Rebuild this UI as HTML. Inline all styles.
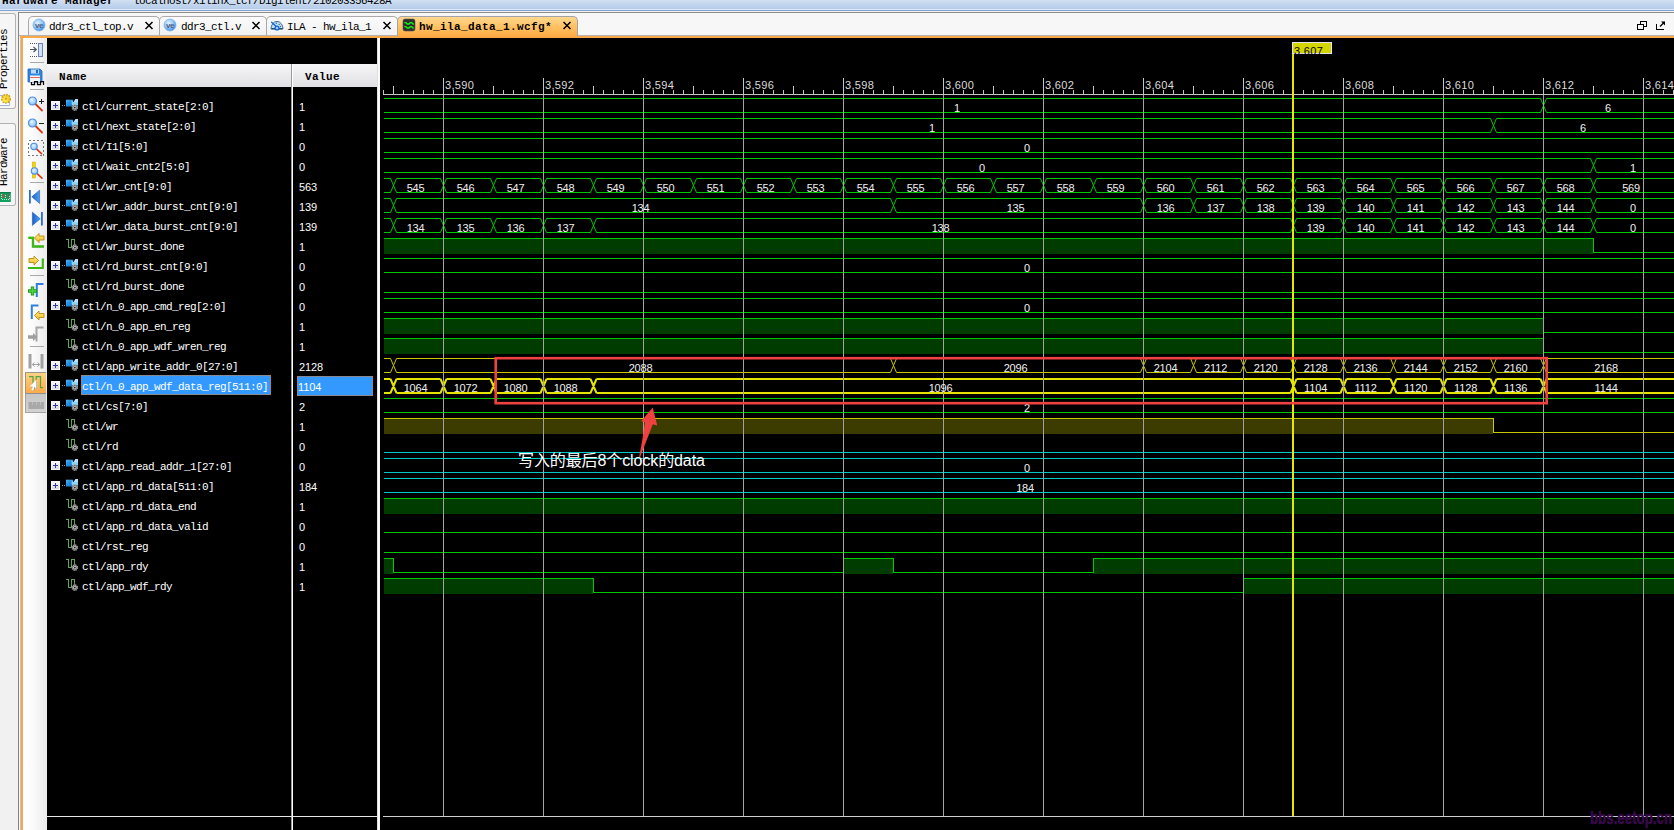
<!DOCTYPE html>
<html><head><meta charset="utf-8"><title>hw_ila_data_1.wcfg</title>
<style>
*{margin:0;padding:0;box-sizing:border-box}
html,body{width:1674px;height:830px;overflow:hidden;background:#000}
body{position:relative;font-family:"Liberation Mono",monospace;font-size:11px;letter-spacing:-0.6px;color:#000;line-height:12px}
.abs{position:absolute}
#titlebar{left:0;top:0;width:1674px;height:10px;background:linear-gradient(#d2e0f2,#bdd2ec 60%,#b4cbe9);overflow:hidden}
#titlebar .t{position:absolute;top:-5px;white-space:pre;height:12px}
#tl1{left:0;top:9px;width:1674px;height:1px;background:#dfe9f6}
#tl2{left:0;top:10px;width:1674px;height:1px;background:#7fa3d3}
#tl3{left:0;top:11px;width:1674px;height:1px;background:#f2f2f2}
#side{left:0;top:11px;width:18px;height:819px;background:#f1f1f1}
.vtab{left:0;width:16px;background:#f6f6f6;border:1px solid #b2b2b2;border-left:none;border-radius:0 3px 3px 0}
.vtxt{position:absolute;white-space:pre;transform-origin:0 0;transform:rotate(-90deg);height:12px}
#frameT{left:18px;top:12px;width:1656px;height:1px;background:#8e8e8e}
#frameL{left:18px;top:12px;width:1px;height:818px;background:#858585}
#tabbar{left:19px;top:13px;width:1655px;height:23px;background:#f7f7f7}
.tab{top:16px;height:19px;background:linear-gradient(#fbfbfb,#f1f1f1);border:1px solid #a9a9a9;border-bottom:none;border-radius:5px 5px 0 0}
.tab.act{height:20px;background:linear-gradient(#ffd890,#ffc468 45%,#ffab42);border-color:#a2a2aa}
.tabt{position:absolute;top:4px;white-space:pre;height:12px}
#orgT{left:20px;top:36px;width:1654px;height:2px;background:#fba748}
#orgL{left:21px;top:36px;width:2px;height:794px;background:#fba748}
#gapL{left:19px;top:13px;width:2px;height:817px;background:#f7f7f7}
#tool{left:23px;top:38px;width:24px;height:792px;background:linear-gradient(90deg,#ffffff,#fbfbfb 40%,#ececec)}
.sep{left:30px;width:14px;height:1px;background:#a9a9a9}
#hdrN{left:47px;top:64px;width:244px;height:23px;background:linear-gradient(#f6f6f7,#ececee 45%,#e1e0e5)}
#hdrV{left:293px;top:64px;width:84px;height:23px;background:linear-gradient(#f6f6f7,#ececee 45%,#e1e0e5)}
.hb{font-weight:bold;letter-spacing:0.4px}
.nm{position:absolute;left:82px;color:#fff;white-space:pre;height:12px}
.vl{position:absolute;left:299px;color:#fff;white-space:pre;font-family:"Liberation Sans",sans-serif;font-size:11px;letter-spacing:-0.1px;height:12px}
svg{position:absolute;left:0;top:0;overflow:visible;z-index:2}
svg text{font-family:"Liberation Sans",sans-serif;font-size:11px;letter-spacing:-0.15px}
</style></head>
<body>
<div id="titlebar" class="abs"><span class="t hb" style="left:2px">Hardware Manager</span><span class="t" style="left:133px">localhost/xilinx_tcf/Digilent/210203356428A</span></div>
<div id="tl1" class="abs"></div>
<div id="tl2" class="abs"></div>
<div id="tl3" class="abs"></div>
<div id="side" class="abs"></div>
<div class="abs vtab" style="top:13px;height:96px"></div>
<div class="abs vtab" style="top:123px;height:83px"></div>
<div class="vtxt" style="left:-2px;top:89px">Properties</div>
<div class="vtxt" style="left:-2px;top:186px">Hardware</div>
<div id="tabbar" class="abs"></div>
<div id="gapL" class="abs"></div>
<div id="frameT" class="abs"></div>
<div id="frameL" class="abs"></div>
<div class="abs" style="left:19px;top:35px;width:1655px;height:1px;background:#b4b4b4"></div>
<div class="abs tab" style="left:28px;width:132px"><span class="tabt" style="left:20px">ddr3_ctl_top.v</span></div>
<div class="abs tab" style="left:159px;width:108px"><span class="tabt" style="left:21px">ddr3_ctl.v</span></div>
<div class="abs tab" style="left:266px;width:132px"><span class="tabt" style="left:20px">ILA - hw_ila_1</span></div>
<div class="abs tab act" style="left:397px;width:181px"><span class="tabt hb" style="left:21px">hw_ila_data_1.wcfg*</span></div>
<div id="orgT" class="abs"></div>
<div id="orgL" class="abs"></div>
<div class="abs" style="left:20px;top:38px;width:1px;height:792px;background:#c4c4c4"></div>
<div id="tool" class="abs"></div>
<div class="abs sep" style="top:62px"></div>
<div class="abs sep" style="top:89px"></div>
<div class="abs sep" style="top:182px"></div>
<div class="abs sep" style="top:275px"></div>
<div class="abs sep" style="top:346px"></div>
<div class="abs" style="left:25px;top:372px;width:21px;height:22px;background:linear-gradient(#ffd286,#ffbc62 50%,#fdab4a);border:1px solid #9a948c;border-right:none;border-bottom-color:#8e8e8e"></div>
<div class="abs" style="left:25px;top:394px;width:21px;height:19px;background:linear-gradient(#c6c6c6,#d2d2d2);border:1px solid #a4a4a4;border-right:none;border-top:none"></div>
<div id="hdrN" class="abs"><span class="abs hb" style="left:12px;top:7px">Name</span></div>
<div id="hdrV" class="abs"><span class="abs hb" style="left:12px;top:7px">Value</span></div>
<div class="abs" style="left:291px;top:64px;width:1px;height:766px;background:#9a9a9a"></div>
<div class="abs" style="left:292px;top:64px;width:1px;height:766px;background:#ffffff"></div>
<div class="abs" style="left:377px;top:38px;width:3px;height:792px;background:linear-gradient(90deg,#c8c8c8,#ffffff 40%,#f4f4f4)"></div>
<div class="abs" style="left:47px;top:816px;width:330px;height:1px;background:#e8e8e8"></div>
<div class="abs" style="left:81px;top:375px;width:190px;height:20px;background:#3399ff;border:1px dotted #d87a28"></div>
<div class="abs" style="left:297px;top:376px;width:76px;height:20px;background:#3399ff;border:1px dotted #d87a28"></div>
<div class="nm" style="top:101px">ctl/current_state[2:0]</div>
<div class="vl" style="left:299px;top:101px">1</div>
<div class="nm" style="top:121px">ctl/next_state[2:0]</div>
<div class="vl" style="left:299px;top:121px">1</div>
<div class="nm" style="top:141px">ctl/I1[5:0]</div>
<div class="vl" style="left:299px;top:141px">0</div>
<div class="nm" style="top:161px">ctl/wait_cnt2[5:0]</div>
<div class="vl" style="left:299px;top:161px">0</div>
<div class="nm" style="top:181px">ctl/wr_cnt[9:0]</div>
<div class="vl" style="left:299px;top:181px">563</div>
<div class="nm" style="top:201px">ctl/wr_addr_burst_cnt[9:0]</div>
<div class="vl" style="left:299px;top:201px">139</div>
<div class="nm" style="top:221px">ctl/wr_data_burst_cnt[9:0]</div>
<div class="vl" style="left:299px;top:221px">139</div>
<div class="nm" style="top:241px">ctl/wr_burst_done</div>
<div class="vl" style="left:299px;top:241px">1</div>
<div class="nm" style="top:261px">ctl/rd_burst_cnt[9:0]</div>
<div class="vl" style="left:299px;top:261px">0</div>
<div class="nm" style="top:281px">ctl/rd_burst_done</div>
<div class="vl" style="left:299px;top:281px">0</div>
<div class="nm" style="top:301px">ctl/n_0_app_cmd_reg[2:0]</div>
<div class="vl" style="left:299px;top:301px">0</div>
<div class="nm" style="top:321px">ctl/n_0_app_en_reg</div>
<div class="vl" style="left:299px;top:321px">1</div>
<div class="nm" style="top:341px">ctl/n_0_app_wdf_wren_reg</div>
<div class="vl" style="left:299px;top:341px">1</div>
<div class="nm" style="top:361px">ctl/app_write_addr_0[27:0]</div>
<div class="vl" style="left:299px;top:361px">2128</div>
<div class="nm" style="top:381px">ctl/n_0_app_wdf_data_reg[511:0]</div>
<div class="vl" style="left:298px;top:381px">1104</div>
<div class="nm" style="top:401px">ctl/cs[7:0]</div>
<div class="vl" style="left:299px;top:401px">2</div>
<div class="nm" style="top:421px">ctl/wr</div>
<div class="vl" style="left:299px;top:421px">1</div>
<div class="nm" style="top:441px">ctl/rd</div>
<div class="vl" style="left:299px;top:441px">0</div>
<div class="nm" style="top:461px">ctl/app_read_addr_1[27:0]</div>
<div class="vl" style="left:299px;top:461px">0</div>
<div class="nm" style="top:481px">ctl/app_rd_data[511:0]</div>
<div class="vl" style="left:299px;top:481px">184</div>
<div class="nm" style="top:501px">ctl/app_rd_data_end</div>
<div class="vl" style="left:299px;top:501px">1</div>
<div class="nm" style="top:521px">ctl/app_rd_data_valid</div>
<div class="vl" style="left:299px;top:521px">0</div>
<div class="nm" style="top:541px">ctl/rst_reg</div>
<div class="vl" style="left:299px;top:541px">0</div>
<div class="nm" style="top:561px">ctl/app_rdy</div>
<div class="vl" style="left:299px;top:561px">1</div>
<div class="nm" style="top:581px">ctl/app_wdf_rdy</div>
<div class="vl" style="left:299px;top:581px">1</div>
<div class="abs" style="left:518px;top:451px;color:#fff;font-family:'Liberation Sans','Noto Sans CJK SC',sans-serif;font-size:16px;line-height:20px;letter-spacing:-0.1px;z-index:5;white-space:pre">写入的最后8个clock的data</div>
<div class="abs" style="left:1590px;top:808px;color:#380a4a;-webkit-text-stroke:0.5px #380a4a;font-family:'Liberation Sans',sans-serif;font-weight:bold;font-size:17.5px;line-height:20px;letter-spacing:0;white-space:pre;transform-origin:0 0;transform:scaleX(0.76);z-index:5">bbs.eetop.cn</div>
<svg width="1674" height="830" viewBox="0 0 1674 830">
<path d="M145.5 22 L152.5 29 M152.5 22 L145.5 29" stroke="#000" stroke-width="1.5" fill="none"/>
<path d="M252.5 22 L259.5 29 M259.5 22 L252.5 29" stroke="#000" stroke-width="1.5" fill="none"/>
<path d="M383.5 22 L390.5 29 M390.5 22 L383.5 29" stroke="#000" stroke-width="1.5" fill="none"/>
<path d="M563.5 22 L570.5 29 M570.5 22 L563.5 29" stroke="#000" stroke-width="1.5" fill="none"/>
<defs>
<linearGradient id="gbus" x1="0" y1="0" x2="1" y2="1"><stop offset="0" stop-color="#56b4f2"/><stop offset="0.45" stop-color="#2390e2"/><stop offset="1" stop-color="#1272cc"/></linearGradient>
<linearGradient id="gexp" x1="0" y1="0" x2="0" y2="1"><stop offset="0" stop-color="#ffffff"/><stop offset="1" stop-color="#d4d4d4"/></linearGradient>
<radialGradient id="gve" cx="0.4" cy="0.35" r="0.7"><stop offset="0" stop-color="#e4f2ff"/><stop offset="0.55" stop-color="#93c6f5"/><stop offset="1" stop-color="#3583de"/></radialGradient>
<radialGradient id="glens" cx="0.4" cy="0.35" r="0.7"><stop offset="0" stop-color="#e6f4ff"/><stop offset="0.7" stop-color="#9fd0fa"/><stop offset="1" stop-color="#5aa4ec"/></radialGradient>
<linearGradient id="gyel" x1="0" y1="0" x2="0" y2="1"><stop offset="0" stop-color="#fff08a"/><stop offset="1" stop-color="#f0b820"/></linearGradient>
<linearGradient id="ggrn" x1="0" y1="0" x2="0" y2="1"><stop offset="0" stop-color="#58e020"/><stop offset="1" stop-color="#2a9010"/></linearGradient>
<linearGradient id="gblu" x1="0" y1="0" x2="1" y2="0"><stop offset="0" stop-color="#1a60c8"/><stop offset="1" stop-color="#50a0f0"/></linearGradient>
<g id="gear"><circle cx="0" cy="0" r="2.8" fill="#6a6a6a"/><circle cx="0" cy="0" r="2.75" fill="none" stroke="#a8a8a8" stroke-width="1.1" stroke-dasharray="1.2 0.96"/><circle cx="0" cy="0" r="1.7" fill="#cfcfcf"/><circle cx="0" cy="0" r="0.9" fill="#1a1a1a"/></g>
<g id="exp"><rect x="0.5" y="0.5" width="8" height="8" fill="url(#gexp)" stroke="#f4f4f4" stroke-width="1"/><path d="M2 4.5H7M4.5 2V7" stroke="#2a3f9c" stroke-width="1" fill="none" shape-rendering="crispEdges"/></g>
<g id="busic"><path d="M5.5 7.6 L8.5 10.5 L9 7.5 Z" fill="#3a3a3a" opacity="0.7"/><rect x="0" y="0.7" width="7.2" height="6.8" fill="url(#gbus)"/><path d="M5.6 0.9 L7.6 3.2 L9.6 0 L12 0 L12 6.6 L7 7.4 L5.6 5 Z" fill="#8fd0f7"/><path d="M7.6 3.2 L9.6 0 L12 0 L12 3 Z" fill="#b9e2fa"/><use href="#gear" x="8.8" y="8.6"/></g>
<g id="bitic"><path d="M0 0.5 H2.5 V8.5 H5.5 V0.5 H8.5 V6" stroke="#62a552" stroke-width="1" fill="none" shape-rendering="crispEdges"/><use href="#gear" x="8.8" y="8.6"/></g>
<g id="lens"><path d="M3 3 L9.5 9.5" stroke="#d83a18" stroke-width="1.8" stroke-linecap="round"/><circle cx="0" cy="0" r="4" fill="url(#glens)" stroke="#4d8fe0" stroke-width="1.2"/></g>
<g id="lenss"><path d="M2.4 2.4 L7.5 7.2" stroke="#d83a18" stroke-width="1.6" stroke-linecap="round"/><circle cx="0" cy="0" r="3.2" fill="url(#glens)" stroke="#4d8fe0" stroke-width="1.1"/></g>
<g id="xarrL"><path d="M0 4.5 L4.5 0 V2.5 H9.5 V6.5 H4.5 V9 Z" fill="url(#gyel)" stroke="#b88a10" stroke-width="0.9" stroke-linejoin="round"/></g>
<g id="xarrR"><path d="M9.5 4.5 L5 0 V2.5 H0 V6.5 H5 V9 Z" fill="url(#gyel)" stroke="#b88a10" stroke-width="0.9" stroke-linejoin="round"/></g>
</defs>
<use href="#exp" x="51" y="101"/>
<path d="M61.5 105.5h1m1 0h1m1 0h1" stroke="#9a9a9a" stroke-width="1" shape-rendering="crispEdges"/>
<use href="#busic" x="66" y="99"/>
<use href="#exp" x="51" y="121"/>
<path d="M61.5 125.5h1m1 0h1m1 0h1" stroke="#9a9a9a" stroke-width="1" shape-rendering="crispEdges"/>
<use href="#busic" x="66" y="119"/>
<use href="#exp" x="51" y="141"/>
<path d="M61.5 145.5h1m1 0h1m1 0h1" stroke="#9a9a9a" stroke-width="1" shape-rendering="crispEdges"/>
<use href="#busic" x="66" y="139"/>
<use href="#exp" x="51" y="161"/>
<path d="M61.5 165.5h1m1 0h1m1 0h1" stroke="#9a9a9a" stroke-width="1" shape-rendering="crispEdges"/>
<use href="#busic" x="66" y="159"/>
<use href="#exp" x="51" y="181"/>
<path d="M61.5 185.5h1m1 0h1m1 0h1" stroke="#9a9a9a" stroke-width="1" shape-rendering="crispEdges"/>
<use href="#busic" x="66" y="179"/>
<use href="#exp" x="51" y="201"/>
<path d="M61.5 205.5h1m1 0h1m1 0h1" stroke="#9a9a9a" stroke-width="1" shape-rendering="crispEdges"/>
<use href="#busic" x="66" y="199"/>
<use href="#exp" x="51" y="221"/>
<path d="M61.5 225.5h1m1 0h1m1 0h1" stroke="#9a9a9a" stroke-width="1" shape-rendering="crispEdges"/>
<use href="#busic" x="66" y="219"/>
<use href="#bitic" x="66" y="239"/>
<use href="#exp" x="51" y="261"/>
<path d="M61.5 265.5h1m1 0h1m1 0h1" stroke="#9a9a9a" stroke-width="1" shape-rendering="crispEdges"/>
<use href="#busic" x="66" y="259"/>
<use href="#bitic" x="66" y="279"/>
<use href="#exp" x="51" y="301"/>
<path d="M61.5 305.5h1m1 0h1m1 0h1" stroke="#9a9a9a" stroke-width="1" shape-rendering="crispEdges"/>
<use href="#busic" x="66" y="299"/>
<use href="#bitic" x="66" y="319"/>
<use href="#bitic" x="66" y="339"/>
<use href="#exp" x="51" y="361"/>
<path d="M61.5 365.5h1m1 0h1m1 0h1" stroke="#9a9a9a" stroke-width="1" shape-rendering="crispEdges"/>
<use href="#busic" x="66" y="359"/>
<use href="#exp" x="51" y="381"/>
<path d="M61.5 385.5h1m1 0h1m1 0h1" stroke="#9a9a9a" stroke-width="1" shape-rendering="crispEdges"/>
<use href="#busic" x="66" y="379"/>
<use href="#exp" x="51" y="401"/>
<path d="M61.5 405.5h1m1 0h1m1 0h1" stroke="#9a9a9a" stroke-width="1" shape-rendering="crispEdges"/>
<use href="#busic" x="66" y="399"/>
<use href="#bitic" x="66" y="419"/>
<use href="#bitic" x="66" y="439"/>
<use href="#exp" x="51" y="461"/>
<path d="M61.5 465.5h1m1 0h1m1 0h1" stroke="#9a9a9a" stroke-width="1" shape-rendering="crispEdges"/>
<use href="#busic" x="66" y="459"/>
<use href="#exp" x="51" y="481"/>
<path d="M61.5 485.5h1m1 0h1m1 0h1" stroke="#9a9a9a" stroke-width="1" shape-rendering="crispEdges"/>
<use href="#busic" x="66" y="479"/>
<use href="#bitic" x="66" y="499"/>
<use href="#bitic" x="66" y="519"/>
<use href="#bitic" x="66" y="539"/>
<use href="#bitic" x="66" y="559"/>
<use href="#bitic" x="66" y="579"/>
<circle cx="39" cy="25" r="6" fill="url(#gve)" stroke="#7ab4ee" stroke-width="0.8"/>
<text x="39" y="27.6" text-anchor="middle" style="font-size:8px;font-weight:bold;letter-spacing:-0.4px" fill="#4a5f86">ve</text>
<circle cx="170" cy="25" r="6" fill="url(#gve)" stroke="#7ab4ee" stroke-width="0.8"/>
<text x="170" y="27.6" text-anchor="middle" style="font-size:8px;font-weight:bold;letter-spacing:-0.4px" fill="#4a5f86">ve</text>
<path d="M271 29 A6 7.6 0 0 1 283 29 Z" fill="#bfe0f6" stroke="#3d6f8e" stroke-width="1"/>
<path d="M271.5 28.7 H282.5" stroke="#1f4860" stroke-width="1.2"/>
<circle cx="276.3" cy="23.3" r="0.7" fill="#466a80"/><circle cx="279.2" cy="24.4" r="0.7" fill="#466a80"/><circle cx="280.4" cy="26.5" r="0.7" fill="#466a80"/>
<path d="M271.6 22.2 L277.4 27.6" stroke="#1466d4" stroke-width="1.3" stroke-linecap="round"/><circle cx="277" cy="28" r="1.9" fill="#9ccdf5" stroke="#1466d4" stroke-width="1.3"/>
<rect x="403" y="19" width="12" height="12" rx="2" fill="#2e2e2e" stroke="#555" stroke-width="0.6"/>
<path d="M404.300 22.700 h1.700 l1.200 1.300 h1.800 l1.200 -1.300 h1.600 l1.200 1.300 h0.800 M404.300 26.700 h1.700 l1.200 1.300 h1.800 l1.200 -1.300 h1.600 l1.200 1.300 h0.800" stroke="#14f614" stroke-width="1.300" fill="none" stroke-linejoin="round"/>
<g fill="none" stroke="#000" stroke-width="1.3" shape-rendering="crispEdges"><rect x="1640.5" y="21.5" width="6" height="5" fill="#f7f7f7"/><rect x="1637.5" y="24.5" width="6" height="5" fill="#f7f7f7"/></g>
<path d="M1656.5 24 V29.5 H1664" fill="none" stroke="#000" stroke-width="1.3" shape-rendering="crispEdges"/><path d="M1660 26.5 L1664.5 22" stroke="#000" stroke-width="1.3"/><path d="M1661 21.5 H1665 V25.5 Z" fill="#000"/>
<path d="M0 95.500 H9.500 V105.500 H0" fill="#ffffff" stroke="#9db4dc" stroke-width="1"/>
<circle cx="6" cy="98.800" r="4.300" fill="#f3cf2e" stroke="#cf9a1c" stroke-width="1.300" stroke-dasharray="1.700 1.150"/><circle cx="5.300" cy="99.500" r="2.600" fill="#faea50" opacity="0.8"/><circle cx="6" cy="98.800" r="1" fill="#d48e18"/>
<rect x="0" y="192" width="10.800" height="10" fill="#12a05e"/><rect x="0" y="192" width="10.800" height="1.200" fill="#0b8048"/><rect x="3" y="194" width="1.200" height="4" fill="#f03030"/><rect x="6" y="194" width="1" height="4" fill="#5a6a62"/><rect x="8" y="194" width="1" height="4.500" fill="#5a6a62"/><path d="M1.500 194.500h0.010M1.500 196.500h0.010M1.500 198.500h0.010M2.500 199.500h0.010M4.500 199.500h0.010M6.500 199.500h0.010M8.500 199.500h0.010M9.500 198.500h0.010M9.500 196.500h0.010M5.500 195.500h0.010M5.500 197.500h0.010" stroke="#d8f0e2" stroke-width="0.900" stroke-linecap="square"/>
<path d="M30 43.5h8M30 56.5h8" stroke="#505060" stroke-width="1" stroke-dasharray="1 1" shape-rendering="crispEdges"/>
<path d="M30 49.5 H36 M33.5 47 L36.3 49.5 L33.5 52" stroke="#4a5068" stroke-width="1.1" fill="none"/>
<rect x="38.5" y="43.5" width="4" height="13" fill="#cfe2f6" stroke="#6b84b4" stroke-width="1"/>
<path d="M28 69 H40 L42 71 V82 H28 Z" fill="#2f86e0" stroke="#1d62b8" stroke-width="0.8"/><rect x="31" y="69.5" width="8" height="4" fill="#bcdcf8"/><rect x="36" y="70" width="2" height="3" fill="#2a68b8"/><rect x="30" y="75.500" width="10" height="6.5" fill="#f2f6fa"/><path d="M30 77.5h10" stroke="#e05848" stroke-width="0.9"/>
<path d="M31.500 82 V84.500 H34.500 V81.500 H37.500 V84.500 H40.500 V81.500 H43.500 V85" fill="none" stroke="#000" stroke-width="1.250"/>
<use href="#lens" x="32.5" y="101"/><path d="M39 101.500h5M41.500 99v5" stroke="#222" stroke-width="1" shape-rendering="crispEdges"/>
<use href="#lens" x="32.5" y="123"/><path d="M39 123.500h5" stroke="#222" stroke-width="1" shape-rendering="crispEdges"/>
<rect x="28.5" y="140.5" width="15" height="15" fill="none" stroke="#777" stroke-width="1" stroke-dasharray="2 2" shape-rendering="crispEdges"/><use href="#lenss" x="34" y="146.5"/>
<rect x="32.3" y="162" width="3" height="16" fill="#f2d800" stroke="#c8a800" stroke-width="0.5"/><use href="#lenss" x="34.5" y="171"/>
<rect x="29" y="190" width="1.8" height="13.5" fill="#2a6fd0"/><path d="M31.8 196.8 L39.6 190.2 V203.400 Z" fill="url(#gblu)" stroke="#1d5cc0" stroke-width="0.6"/>
<rect x="41" y="212" width="1.8" height="13.5" fill="#2a6fd0"/><path d="M40.2 218.8 L32.400 212.2 V225.400 Z" fill="url(#gblu)" stroke="#1d5cc0" stroke-width="0.6"/>
<path d="M28.5 237.8 H33 V246.500 H44" fill="none" stroke="url(#ggrn)" stroke-width="2.2"/><path d="M28.5 237.8 H33 V246.500 H44" fill="none" stroke="#3cb818" stroke-width="2.2"/><use href="#xarrL" x="34.500" y="233.5"/>
<path d="M28 268 H42.800 V259.500 H44" fill="none" stroke="#3cb818" stroke-width="2.2"/><use href="#xarrR" x="29" y="256"/>
<path d="M36.800 297 V284 H43.500" fill="none" stroke="#2f7fe0" stroke-width="2"/><path d="M28 291 H37 M32.500 286.500 V295.500" stroke="#1e9a1a" stroke-width="3.4"/><path d="M29 291 H36 M32.500 287.500 V294.500" stroke="#4fd83a" stroke-width="1.6"/>
<path d="M31.800 319 V305.500 H38.500" fill="none" stroke="#2f7fe0" stroke-width="2"/><use href="#xarrL" x="34.500" y="311"/>
<path d="M36.500 341.500 V327.500 H43.500" fill="none" stroke="#a6a6a6" stroke-width="2"/><path d="M28 335.300 H33 V333 L37.500 337 L33 341 V338.700 H28 Z" fill="#a0a0a0"/>
<rect x="28.500" y="354" width="3" height="14.5" fill="#a2a2a2"/><rect x="40.500" y="354" width="3" height="14.5" fill="#a2a2a2"/><path d="M32.500 364.500 H39.500 M34.500 362.500 L32.300 364.500 L34.500 366.500 M37.500 362.500 L39.700 364.500 L37.500 366.500" stroke="#a0a0a0" stroke-width="1" fill="none"/>
<path d="M29 376.700 H33 V387.700 H36.200 V376.700 H40.500 V387.700 H43" fill="none" stroke="#4fa546" stroke-width="1.2"/><path d="M36.900 380.300 V389.400 L35 387.500 L34 391 L32.300 390.600 L33.300 387.200 L30.300 387.200 Z" fill="#7c7c86" opacity="0.8"/><path d="M36.300 379.800 V388.700 L34.300 386.800 L33.300 390.400 L31.800 390 L32.800 386.600 L30 386.600 Z" fill="#fff" stroke="#f4f4f4" stroke-width="0.4"/>
<rect x="28.500" y="402" width="15.500" height="7" fill="#a9a9a9"/><path d="M32.500 402v3M36.500 402v3M40.500 402v3" stroke="#bdbdbd" stroke-width="1"/>
<path d="M383 94.5H1674M383.5 90V95M393.5 86V95M403.5 90V95M413.5 90V95M423.5 90V95M433.5 90V95M443.5 78V95M453.5 90V95M463.5 90V95M473.5 90V95M483.5 90V95M493.5 86V95M503.5 90V95M513.5 90V95M523.5 90V95M533.5 90V95M543.5 78V95M553.5 90V95M563.5 90V95M573.5 90V95M583.5 90V95M593.5 86V95M603.5 90V95M613.5 90V95M623.5 90V95M633.5 90V95M643.5 78V95M653.5 90V95M663.5 90V95M673.5 90V95M683.5 90V95M693.5 86V95M703.5 90V95M713.5 90V95M723.5 90V95M733.5 90V95M743.5 78V95M753.5 90V95M763.5 90V95M773.5 90V95M783.5 90V95M793.5 86V95M803.5 90V95M813.5 90V95M823.5 90V95M833.5 90V95M843.5 78V95M853.5 90V95M863.5 90V95M873.5 90V95M883.5 90V95M893.5 86V95M903.5 90V95M913.5 90V95M923.5 90V95M933.5 90V95M943.5 78V95M953.5 90V95M963.5 90V95M973.5 90V95M983.5 90V95M993.5 86V95M1003.5 90V95M1013.5 90V95M1023.5 90V95M1033.5 90V95M1043.5 78V95M1053.5 90V95M1063.5 90V95M1073.5 90V95M1083.5 90V95M1093.5 86V95M1103.5 90V95M1113.5 90V95M1123.5 90V95M1133.5 90V95M1143.5 78V95M1153.5 90V95M1163.5 90V95M1173.5 90V95M1183.5 90V95M1193.5 86V95M1203.5 90V95M1213.5 90V95M1223.5 90V95M1233.5 90V95M1243.5 78V95M1253.5 90V95M1263.5 90V95M1273.5 90V95M1283.5 90V95M1293.5 86V95M1303.5 90V95M1313.5 90V95M1323.5 90V95M1333.5 90V95M1343.5 78V95M1353.5 90V95M1363.5 90V95M1373.5 90V95M1383.5 90V95M1393.5 86V95M1403.5 90V95M1413.5 90V95M1423.5 90V95M1433.5 90V95M1443.5 78V95M1453.5 90V95M1463.5 90V95M1473.5 90V95M1483.5 90V95M1493.5 86V95M1503.5 90V95M1513.5 90V95M1523.5 90V95M1533.5 90V95M1543.5 78V95M1553.5 90V95M1563.5 90V95M1573.5 90V95M1583.5 90V95M1593.5 86V95M1603.5 90V95M1613.5 90V95M1623.5 90V95M1633.5 90V95M1643.5 78V95M1653.5 90V95M1663.5 90V95M1673.5 90V95" stroke="#c4c4c4" stroke-width="1" fill="none" shape-rendering="crispEdges"/>
<text x="445" y="89" fill="#dcdcdc" style="letter-spacing:0.35px">3,590</text>
<text x="545" y="89" fill="#dcdcdc" style="letter-spacing:0.35px">3,592</text>
<text x="645" y="89" fill="#dcdcdc" style="letter-spacing:0.35px">3,594</text>
<text x="745" y="89" fill="#dcdcdc" style="letter-spacing:0.35px">3,596</text>
<text x="845" y="89" fill="#dcdcdc" style="letter-spacing:0.35px">3,598</text>
<text x="945" y="89" fill="#dcdcdc" style="letter-spacing:0.35px">3,600</text>
<text x="1045" y="89" fill="#dcdcdc" style="letter-spacing:0.35px">3,602</text>
<text x="1145" y="89" fill="#dcdcdc" style="letter-spacing:0.35px">3,604</text>
<text x="1245" y="89" fill="#dcdcdc" style="letter-spacing:0.35px">3,606</text>
<text x="1345" y="89" fill="#dcdcdc" style="letter-spacing:0.35px">3,608</text>
<text x="1445" y="89" fill="#dcdcdc" style="letter-spacing:0.35px">3,610</text>
<text x="1545" y="89" fill="#dcdcdc" style="letter-spacing:0.35px">3,612</text>
<text x="1645" y="89" fill="#dcdcdc" style="letter-spacing:0.35px">3,614</text>
<path d="M384 98.5H1540.5M384 112.5H1540.5M1540.5 98.5L1546.5 112.5M1540.5 112.5L1546.5 98.5M1546.5 98.5H1674M1546.5 112.5H1674" fill="none" stroke="#00c800" stroke-width="1"/>
<path d="M384 118.5H1490.5M384 132.5H1490.5M1490.5 118.5L1496.5 132.5M1490.5 132.5L1496.5 118.5M1496.5 118.5H1674M1496.5 132.5H1674" fill="none" stroke="#00c800" stroke-width="1"/>
<path d="M384 138.5H1674M384 152.5H1674" fill="none" stroke="#00c800" stroke-width="1"/>
<path d="M384 158.5H1590.5M384 172.5H1590.5M1590.5 158.5L1596.5 172.5M1590.5 172.5L1596.5 158.5M1596.5 158.5H1674M1596.5 172.5H1674" fill="none" stroke="#00c800" stroke-width="1"/>
<path d="M384 178.5H390.5M384 192.5H390.5M390.5 178.5L396.5 192.5M390.5 192.5L396.5 178.5M396.5 178.5H440.5M396.5 192.5H440.5M440.5 178.5L446.5 192.5M440.5 192.5L446.5 178.5M446.5 178.5H490.5M446.5 192.5H490.5M490.5 178.5L496.5 192.5M490.5 192.5L496.5 178.5M496.5 178.5H540.5M496.5 192.5H540.5M540.5 178.5L546.5 192.5M540.5 192.5L546.5 178.5M546.5 178.5H590.5M546.5 192.5H590.5M590.5 178.5L596.5 192.5M590.5 192.5L596.5 178.5M596.5 178.5H640.5M596.5 192.5H640.5M640.5 178.5L646.5 192.5M640.5 192.5L646.5 178.5M646.5 178.5H690.5M646.5 192.5H690.5M690.5 178.5L696.5 192.5M690.5 192.5L696.5 178.5M696.5 178.5H740.5M696.5 192.5H740.5M740.5 178.5L746.5 192.5M740.5 192.5L746.5 178.5M746.5 178.5H790.5M746.5 192.5H790.5M790.5 178.5L796.5 192.5M790.5 192.5L796.5 178.5M796.5 178.5H840.5M796.5 192.5H840.5M840.5 178.5L846.5 192.5M840.5 192.5L846.5 178.5M846.5 178.5H890.5M846.5 192.5H890.5M890.5 178.5L896.5 192.5M890.5 192.5L896.5 178.5M896.5 178.5H940.5M896.5 192.5H940.5M940.5 178.5L946.5 192.5M940.5 192.5L946.5 178.5M946.5 178.5H990.5M946.5 192.5H990.5M990.5 178.5L996.5 192.5M990.5 192.5L996.5 178.5M996.5 178.5H1040.5M996.5 192.5H1040.5M1040.5 178.5L1046.5 192.5M1040.5 192.5L1046.5 178.5M1046.5 178.5H1090.5M1046.5 192.5H1090.5M1090.5 178.5L1096.5 192.5M1090.5 192.5L1096.5 178.5M1096.5 178.5H1140.5M1096.5 192.5H1140.5M1140.5 178.5L1146.5 192.5M1140.5 192.5L1146.5 178.5M1146.5 178.5H1190.5M1146.5 192.5H1190.5M1190.5 178.5L1196.5 192.5M1190.5 192.5L1196.5 178.5M1196.5 178.5H1240.5M1196.5 192.5H1240.5M1240.5 178.5L1246.5 192.5M1240.5 192.5L1246.5 178.5M1246.5 178.5H1290.5M1246.5 192.5H1290.5M1290.5 178.5L1296.5 192.5M1290.5 192.5L1296.5 178.5M1296.5 178.5H1340.5M1296.5 192.5H1340.5M1340.5 178.5L1346.5 192.5M1340.5 192.5L1346.5 178.5M1346.5 178.5H1390.5M1346.5 192.5H1390.5M1390.5 178.5L1396.5 192.5M1390.5 192.5L1396.5 178.5M1396.5 178.5H1440.5M1396.5 192.5H1440.5M1440.5 178.5L1446.5 192.5M1440.5 192.5L1446.5 178.5M1446.5 178.5H1490.5M1446.5 192.5H1490.5M1490.5 178.5L1496.5 192.5M1490.5 192.5L1496.5 178.5M1496.5 178.5H1540.5M1496.5 192.5H1540.5M1540.5 178.5L1546.5 192.5M1540.5 192.5L1546.5 178.5M1546.5 178.5H1590.5M1546.5 192.5H1590.5M1590.5 178.5L1596.5 192.5M1590.5 192.5L1596.5 178.5M1596.5 178.5H1674M1596.5 192.5H1674" fill="none" stroke="#00c800" stroke-width="1"/>
<path d="M384 198.5H390.5M384 212.5H390.5M390.5 198.5L396.5 212.5M390.5 212.5L396.5 198.5M396.5 198.5H890.5M396.5 212.5H890.5M890.5 198.5L896.5 212.5M890.5 212.5L896.5 198.5M896.5 198.5H1140.5M896.5 212.5H1140.5M1140.5 198.5L1146.5 212.5M1140.5 212.5L1146.5 198.5M1146.5 198.5H1190.5M1146.5 212.5H1190.5M1190.5 198.5L1196.5 212.5M1190.5 212.5L1196.5 198.5M1196.5 198.5H1240.5M1196.5 212.5H1240.5M1240.5 198.5L1246.5 212.5M1240.5 212.5L1246.5 198.5M1246.5 198.5H1290.5M1246.5 212.5H1290.5M1290.5 198.5L1296.5 212.5M1290.5 212.5L1296.5 198.5M1296.5 198.5H1340.5M1296.5 212.5H1340.5M1340.5 198.5L1346.5 212.5M1340.5 212.5L1346.5 198.5M1346.5 198.5H1390.5M1346.5 212.5H1390.5M1390.5 198.5L1396.5 212.5M1390.5 212.5L1396.5 198.5M1396.5 198.5H1440.5M1396.5 212.5H1440.5M1440.5 198.5L1446.5 212.5M1440.5 212.5L1446.5 198.5M1446.5 198.5H1490.5M1446.5 212.5H1490.5M1490.5 198.5L1496.5 212.5M1490.5 212.5L1496.5 198.5M1496.5 198.5H1540.5M1496.5 212.5H1540.5M1540.5 198.5L1546.5 212.5M1540.5 212.5L1546.5 198.5M1546.5 198.5H1590.5M1546.5 212.5H1590.5M1590.5 198.5L1596.5 212.5M1590.5 212.5L1596.5 198.5M1596.5 198.5H1674M1596.5 212.5H1674" fill="none" stroke="#00c800" stroke-width="1"/>
<path d="M384 218.5H390.5M384 232.5H390.5M390.5 218.5L396.5 232.5M390.5 232.5L396.5 218.5M396.5 218.5H440.5M396.5 232.5H440.5M440.5 218.5L446.5 232.5M440.5 232.5L446.5 218.5M446.5 218.5H490.5M446.5 232.5H490.5M490.5 218.5L496.5 232.5M490.5 232.5L496.5 218.5M496.5 218.5H540.5M496.5 232.5H540.5M540.5 218.5L546.5 232.5M540.5 232.5L546.5 218.5M546.5 218.5H590.5M546.5 232.5H590.5M590.5 218.5L596.5 232.5M590.5 232.5L596.5 218.5M596.5 218.5H1290.5M596.5 232.5H1290.5M1290.5 218.5L1296.5 232.5M1290.5 232.5L1296.5 218.5M1296.5 218.5H1340.5M1296.5 232.5H1340.5M1340.5 218.5L1346.5 232.5M1340.5 232.5L1346.5 218.5M1346.5 218.5H1390.5M1346.5 232.5H1390.5M1390.5 218.5L1396.5 232.5M1390.5 232.5L1396.5 218.5M1396.5 218.5H1440.5M1396.5 232.5H1440.5M1440.5 218.5L1446.5 232.5M1440.5 232.5L1446.5 218.5M1446.5 218.5H1490.5M1446.5 232.5H1490.5M1490.5 218.5L1496.5 232.5M1490.5 232.5L1496.5 218.5M1496.5 218.5H1540.5M1496.5 232.5H1540.5M1540.5 218.5L1546.5 232.5M1540.5 232.5L1546.5 218.5M1546.5 218.5H1590.5M1546.5 232.5H1590.5M1590.5 218.5L1596.5 232.5M1590.5 232.5L1596.5 218.5M1596.5 218.5H1674M1596.5 232.5H1674" fill="none" stroke="#00c800" stroke-width="1"/>
<rect x="384" y="239" width="1209" height="15" fill="#003c00" shape-rendering="crispEdges"/>
<path d="M384 238.5H1594M1593.5 238V253M1593 252.5H1674" fill="none" stroke="#00c800" stroke-width="1" shape-rendering="crispEdges"/>
<path d="M384 258.5H1674M384 272.5H1674" fill="none" stroke="#00c800" stroke-width="1"/>
<path d="M384 292.5H1674" fill="none" stroke="#00c800" stroke-width="1" shape-rendering="crispEdges"/>
<path d="M384 298.5H1674M384 312.5H1674" fill="none" stroke="#00c800" stroke-width="1"/>
<rect x="384" y="319" width="1159" height="15" fill="#003c00" shape-rendering="crispEdges"/>
<path d="M384 318.5H1544M1543.5 318V333M1543 332.5H1674" fill="none" stroke="#00c800" stroke-width="1" shape-rendering="crispEdges"/>
<rect x="384" y="339" width="1159" height="15" fill="#003c00" shape-rendering="crispEdges"/>
<path d="M384 338.5H1544M1543.5 338V353M1543 352.5H1674" fill="none" stroke="#00c800" stroke-width="1" shape-rendering="crispEdges"/>
<path d="M384 358.5H390.5M384 372.5H390.5M390.5 358.5L396.5 372.5M390.5 372.5L396.5 358.5M396.5 358.5H890.5M396.5 372.5H890.5M890.5 358.5L896.5 372.5M890.5 372.5L896.5 358.5M896.5 358.5H1140.5M896.5 372.5H1140.5M1140.5 358.5L1146.5 372.5M1140.5 372.5L1146.5 358.5M1146.5 358.5H1190.5M1146.5 372.5H1190.5M1190.5 358.5L1196.5 372.5M1190.5 372.5L1196.5 358.5M1196.5 358.5H1240.5M1196.5 372.5H1240.5M1240.5 358.5L1246.5 372.5M1240.5 372.5L1246.5 358.5M1246.5 358.5H1290.5M1246.5 372.5H1290.5M1290.5 358.5L1296.5 372.5M1290.5 372.5L1296.5 358.5M1296.5 358.5H1340.5M1296.5 372.5H1340.5M1340.5 358.5L1346.5 372.5M1340.5 372.5L1346.5 358.5M1346.5 358.5H1390.5M1346.5 372.5H1390.5M1390.5 358.5L1396.5 372.5M1390.5 372.5L1396.5 358.5M1396.5 358.5H1440.5M1396.5 372.5H1440.5M1440.5 358.5L1446.5 372.5M1440.5 372.5L1446.5 358.5M1446.5 358.5H1490.5M1446.5 372.5H1490.5M1490.5 358.5L1496.5 372.5M1490.5 372.5L1496.5 358.5M1496.5 358.5H1540.5M1496.5 372.5H1540.5M1540.5 358.5L1546.5 372.5M1540.5 372.5L1546.5 358.5M1546.5 358.5H1674M1546.5 372.5H1674" fill="none" stroke="#c8c800" stroke-width="1"/>
<path d="M384 379H390.5M384 393H390.5M390.5 379L396.5 393M390.5 393L396.5 379M396.5 379H440.5M396.5 393H440.5M440.5 379L446.5 393M440.5 393L446.5 379M446.5 379H490.5M446.5 393H490.5M490.5 379L496.5 393M490.5 393L496.5 379M496.5 379H540.5M496.5 393H540.5M540.5 379L546.5 393M540.5 393L546.5 379M546.5 379H590.5M546.5 393H590.5M590.5 379L596.5 393M590.5 393L596.5 379M596.5 379H1290.5M596.5 393H1290.5M1290.5 379L1296.5 393M1290.5 393L1296.5 379M1296.5 379H1340.5M1296.5 393H1340.5M1340.5 379L1346.5 393M1340.5 393L1346.5 379M1346.5 379H1390.5M1346.5 393H1390.5M1390.5 379L1396.5 393M1390.5 393L1396.5 379M1396.5 379H1440.5M1396.5 393H1440.5M1440.5 379L1446.5 393M1440.5 393L1446.5 379M1446.5 379H1490.5M1446.5 393H1490.5M1490.5 379L1496.5 393M1490.5 393L1496.5 379M1496.5 379H1540.5M1496.5 393H1540.5M1540.5 379L1546.5 393M1540.5 393L1546.5 379M1546.5 379H1674M1546.5 393H1674" fill="none" stroke="#e4e400" stroke-width="2"/>
<path d="M384 398.5H1674M384 412.5H1674" fill="none" stroke="#00c800" stroke-width="1"/>
<rect x="384" y="419" width="1109" height="15" fill="#3c3c00" shape-rendering="crispEdges"/>
<path d="M384 418.5H1494M1493.5 418V433M1493 432.5H1674" fill="none" stroke="#c8c800" stroke-width="1" shape-rendering="crispEdges"/>
<path d="M384 452.5H1674" fill="none" stroke="#00c8c8" stroke-width="1" shape-rendering="crispEdges"/>
<path d="M384 458.5H1674M384 472.5H1674" fill="none" stroke="#00c8c8" stroke-width="1"/>
<path d="M384 478.5H1674M384 492.5H1674" fill="none" stroke="#00c8c8" stroke-width="1"/>
<rect x="384" y="499" width="1290" height="15" fill="#003c00" shape-rendering="crispEdges"/>
<path d="M384 498.5H1674" fill="none" stroke="#00c800" stroke-width="1" shape-rendering="crispEdges"/>
<path d="M384 532.5H1674" fill="none" stroke="#00c800" stroke-width="1" shape-rendering="crispEdges"/>
<path d="M384 552.5H1674" fill="none" stroke="#00c800" stroke-width="1" shape-rendering="crispEdges"/>
<rect x="384" y="559" width="9" height="15" fill="#003c00" shape-rendering="crispEdges"/>
<rect x="843" y="559" width="50" height="15" fill="#003c00" shape-rendering="crispEdges"/>
<rect x="1093" y="559" width="581" height="15" fill="#003c00" shape-rendering="crispEdges"/>
<path d="M384 558.5H394M393.5 558V573M393 572.5H844M843.5 558V573M843 558.5H894M893.5 558V573M893 572.5H1094M1093.5 558V573M1093 558.5H1674" fill="none" stroke="#00c800" stroke-width="1" shape-rendering="crispEdges"/>
<rect x="384" y="579" width="209" height="15" fill="#003c00" shape-rendering="crispEdges"/>
<rect x="1243" y="579" width="431" height="15" fill="#003c00" shape-rendering="crispEdges"/>
<path d="M384 578.5H594M593.5 578V593M593 592.5H1244M1243.5 578V593M1243 578.5H1674" fill="none" stroke="#00c800" stroke-width="1" shape-rendering="crispEdges"/>
<path d="M443.5 95V816M543.5 95V816M643.5 95V816M743.5 95V816M843.5 95V816M943.5 95V816M1043.5 95V816M1143.5 95V816M1243.5 95V816M1343.5 95V816M1443.5 95V816M1543.5 95V816M1643.5 95V816" stroke="#a4a4a4" stroke-width="1" fill="none" shape-rendering="crispEdges"/>
<path d="M383 816.5H1674" stroke="#cfcfcf" stroke-width="1" shape-rendering="crispEdges"/>
<text x="957.0" y="112" text-anchor="middle" fill="#f0f0f0">1</text>
<text x="1608.0" y="112" text-anchor="middle" fill="#f0f0f0">6</text>
<text x="932.0" y="132" text-anchor="middle" fill="#f0f0f0">1</text>
<text x="1583.0" y="132" text-anchor="middle" fill="#f0f0f0">6</text>
<text x="1027.0" y="152" text-anchor="middle" fill="#f0f0f0">0</text>
<text x="982.0" y="172" text-anchor="middle" fill="#f0f0f0">0</text>
<text x="1633.0" y="172" text-anchor="middle" fill="#f0f0f0">1</text>
<text x="415.6" y="192" text-anchor="middle" fill="#f0f0f0">545</text>
<text x="465.6" y="192" text-anchor="middle" fill="#f0f0f0">546</text>
<text x="515.6" y="192" text-anchor="middle" fill="#f0f0f0">547</text>
<text x="565.6" y="192" text-anchor="middle" fill="#f0f0f0">548</text>
<text x="615.6" y="192" text-anchor="middle" fill="#f0f0f0">549</text>
<text x="665.6" y="192" text-anchor="middle" fill="#f0f0f0">550</text>
<text x="715.6" y="192" text-anchor="middle" fill="#f0f0f0">551</text>
<text x="765.6" y="192" text-anchor="middle" fill="#f0f0f0">552</text>
<text x="815.6" y="192" text-anchor="middle" fill="#f0f0f0">553</text>
<text x="865.6" y="192" text-anchor="middle" fill="#f0f0f0">554</text>
<text x="915.6" y="192" text-anchor="middle" fill="#f0f0f0">555</text>
<text x="965.6" y="192" text-anchor="middle" fill="#f0f0f0">556</text>
<text x="1015.6" y="192" text-anchor="middle" fill="#f0f0f0">557</text>
<text x="1065.6" y="192" text-anchor="middle" fill="#f0f0f0">558</text>
<text x="1115.6" y="192" text-anchor="middle" fill="#f0f0f0">559</text>
<text x="1165.6" y="192" text-anchor="middle" fill="#f0f0f0">560</text>
<text x="1215.6" y="192" text-anchor="middle" fill="#f0f0f0">561</text>
<text x="1265.6" y="192" text-anchor="middle" fill="#f0f0f0">562</text>
<text x="1315.6" y="192" text-anchor="middle" fill="#f0f0f0">563</text>
<text x="1365.6" y="192" text-anchor="middle" fill="#f0f0f0">564</text>
<text x="1415.6" y="192" text-anchor="middle" fill="#f0f0f0">565</text>
<text x="1465.6" y="192" text-anchor="middle" fill="#f0f0f0">566</text>
<text x="1515.6" y="192" text-anchor="middle" fill="#f0f0f0">567</text>
<text x="1565.6" y="192" text-anchor="middle" fill="#f0f0f0">568</text>
<text x="1631.1" y="192" text-anchor="middle" fill="#f0f0f0">569</text>
<text x="640.6" y="212" text-anchor="middle" fill="#f0f0f0">134</text>
<text x="1015.6" y="212" text-anchor="middle" fill="#f0f0f0">135</text>
<text x="1165.6" y="212" text-anchor="middle" fill="#f0f0f0">136</text>
<text x="1215.6" y="212" text-anchor="middle" fill="#f0f0f0">137</text>
<text x="1265.6" y="212" text-anchor="middle" fill="#f0f0f0">138</text>
<text x="1315.6" y="212" text-anchor="middle" fill="#f0f0f0">139</text>
<text x="1365.6" y="212" text-anchor="middle" fill="#f0f0f0">140</text>
<text x="1415.6" y="212" text-anchor="middle" fill="#f0f0f0">141</text>
<text x="1465.6" y="212" text-anchor="middle" fill="#f0f0f0">142</text>
<text x="1515.6" y="212" text-anchor="middle" fill="#f0f0f0">143</text>
<text x="1565.6" y="212" text-anchor="middle" fill="#f0f0f0">144</text>
<text x="1633.0" y="212" text-anchor="middle" fill="#f0f0f0">0</text>
<text x="415.6" y="232" text-anchor="middle" fill="#f0f0f0">134</text>
<text x="465.6" y="232" text-anchor="middle" fill="#f0f0f0">135</text>
<text x="515.6" y="232" text-anchor="middle" fill="#f0f0f0">136</text>
<text x="565.6" y="232" text-anchor="middle" fill="#f0f0f0">137</text>
<text x="940.6" y="232" text-anchor="middle" fill="#f0f0f0">138</text>
<text x="1315.6" y="232" text-anchor="middle" fill="#f0f0f0">139</text>
<text x="1365.6" y="232" text-anchor="middle" fill="#f0f0f0">140</text>
<text x="1415.6" y="232" text-anchor="middle" fill="#f0f0f0">141</text>
<text x="1465.6" y="232" text-anchor="middle" fill="#f0f0f0">142</text>
<text x="1515.6" y="232" text-anchor="middle" fill="#f0f0f0">143</text>
<text x="1565.6" y="232" text-anchor="middle" fill="#f0f0f0">144</text>
<text x="1633.0" y="232" text-anchor="middle" fill="#f0f0f0">0</text>
<text x="1027.0" y="272" text-anchor="middle" fill="#f0f0f0">0</text>
<text x="1027.0" y="312" text-anchor="middle" fill="#f0f0f0">0</text>
<text x="640.6" y="372" text-anchor="middle" fill="#f0f0f0">2088</text>
<text x="1015.6" y="372" text-anchor="middle" fill="#f0f0f0">2096</text>
<text x="1165.6" y="372" text-anchor="middle" fill="#f0f0f0">2104</text>
<text x="1215.6" y="372" text-anchor="middle" fill="#f0f0f0">2112</text>
<text x="1265.6" y="372" text-anchor="middle" fill="#f0f0f0">2120</text>
<text x="1315.6" y="372" text-anchor="middle" fill="#f0f0f0">2128</text>
<text x="1365.6" y="372" text-anchor="middle" fill="#f0f0f0">2136</text>
<text x="1415.6" y="372" text-anchor="middle" fill="#f0f0f0">2144</text>
<text x="1465.6" y="372" text-anchor="middle" fill="#f0f0f0">2152</text>
<text x="1515.6" y="372" text-anchor="middle" fill="#f0f0f0">2160</text>
<text x="1606.1" y="372" text-anchor="middle" fill="#f0f0f0">2168</text>
<text x="415.6" y="392" text-anchor="middle" fill="#f0f0f0">1064</text>
<text x="465.6" y="392" text-anchor="middle" fill="#f0f0f0">1072</text>
<text x="515.6" y="392" text-anchor="middle" fill="#f0f0f0">1080</text>
<text x="565.6" y="392" text-anchor="middle" fill="#f0f0f0">1088</text>
<text x="940.6" y="392" text-anchor="middle" fill="#f0f0f0">1096</text>
<text x="1315.6" y="392" text-anchor="middle" fill="#f0f0f0">1104</text>
<text x="1365.6" y="392" text-anchor="middle" fill="#f0f0f0">1112</text>
<text x="1415.6" y="392" text-anchor="middle" fill="#f0f0f0">1120</text>
<text x="1465.6" y="392" text-anchor="middle" fill="#f0f0f0">1128</text>
<text x="1515.6" y="392" text-anchor="middle" fill="#f0f0f0">1136</text>
<text x="1606.1" y="392" text-anchor="middle" fill="#f0f0f0">1144</text>
<text x="1027.0" y="412" text-anchor="middle" fill="#f0f0f0">2</text>
<text x="1027.0" y="472" text-anchor="middle" fill="#f0f0f0">0</text>
<text x="1025.1" y="492" text-anchor="middle" fill="#f0f0f0">184</text>
<rect x="1292" y="54" width="2" height="762" fill="#e6e600" shape-rendering="crispEdges"/>
<svg x="1292" y="42" width="40" height="12" viewBox="0 0 40 12" style="overflow:hidden"><rect x="0.5" y="0.5" width="39" height="11" fill="#d4d400" stroke="#e4e4ee" stroke-width="1"/><text x="2" y="13" fill="#000" style="letter-spacing:0.35px">3,607</text></svg>
<rect x="495.7" y="358.2" width="1051" height="45" fill="none" stroke="#f04141" stroke-width="2.6"/>
<path d="M652.7 407.5 L657.2 425.6 L652.8 424.3 Q646.5 441 640 457.2 L639.2 456.8 Q642.5 440 645 422.3 L641.2 421.2 Z" fill="#f04141"/>
</svg>
</body></html>
